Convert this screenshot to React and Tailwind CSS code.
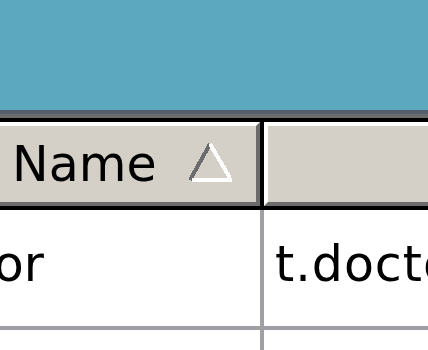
export default function App() {
  return (
    <div className="w-[428px] h-[350px] overflow-hidden bg-white font-['DejaVu_Sans',sans-serif] text-[49px] leading-[49px] text-black">
      <div className="h-[110px] bg-[#5ba8bf]" />
      <div className="h-[4px] bg-[#545e6d]" />
      <div className="h-[4px] bg-[#6b6b6b]" />
      <div className="h-[4px] bg-black" />

      <div className="flex h-[88px]">
        <div className="w-[264px] shrink-0 border-r-4 border-b-4 border-black">
          <div className="h-full flex items-start border-t-4 border-t-white border-r-4 border-b-4 border-r-[#6b6b6b] border-b-[#6b6b6b] bg-[#d4d0c8] pl-[12px]">
            <span className="pt-[14px] whitespace-nowrap">Name</span>
            <svg width="44" height="40" viewBox="0 0 44 40" className="ml-auto mr-[24px] mt-[16px]" shapeRendering="crispEdges">
              <line x1="22" y1="2" x2="2" y2="38" stroke="#6b6b6b" strokeWidth="4" />
              <line x1="22" y1="2" x2="42" y2="36" stroke="#fff" strokeWidth="4" />
              <line x1="4" y1="38" x2="44" y2="38" stroke="#fff" strokeWidth="4" />
            </svg>
          </div>
        </div>
        <div className="flex-1 border-b-4 border-black">
          <div className="h-full border-t-4 border-l-4 border-white border-b-4 border-b-[#6b6b6b] bg-[#d4d0c8]" />
        </div>
      </div>

      <div className="flex h-[120px] border-b-4 border-[#a0a0a4]">
        <div className="w-[264px] shrink-0 overflow-hidden border-r-4 border-[#a0a0a4] pt-[30px]">
          <div className="ml-[-120px] whitespace-nowrap">Doctor</div>
        </div>
        <div className="flex-1 overflow-hidden pt-[30px] pl-[11px] whitespace-nowrap tracking-[1px]">t.doctor</div>
      </div>

      <div className="flex h-[40px]">
        <div className="w-[264px] shrink-0 border-r-4 border-[#a0a0a4]" />
        <div className="flex-1" />
      </div>
    </div>
  );
}
